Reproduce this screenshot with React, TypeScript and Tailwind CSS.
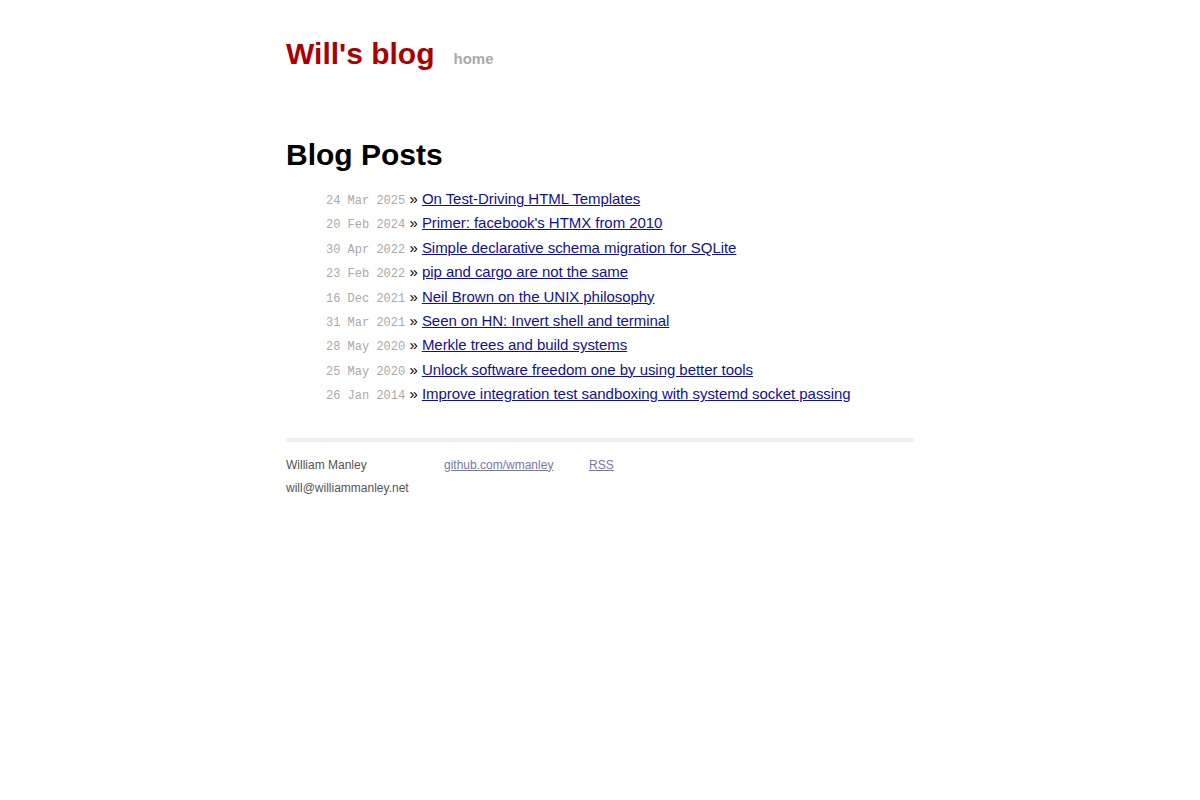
export default function App() {
  const posts = [
    ["24 Mar 2025", "On Test-Driving HTML Templates"],
    ["20 Feb 2024", "Primer: facebook's HTMX from 2010"],
    ["30 Apr 2022", "Simple declarative schema migration for SQLite"],
    ["23 Feb 2022", "pip and cargo are not the same"],
    ["16 Dec 2021", "Neil Brown on the UNIX philosophy"],
    ["31 Mar 2021", "Seen on HN: Invert shell and terminal"],
    ["28 May 2020", "Merkle trees and build systems"],
    ["25 May 2020", "Unlock software freedom one by using better tools"],
    ["26 Jan 2014", "Improve integration test sandboxing with systemd socket passing"],
  ];
  return (
    <div className="min-h-[800px] bg-white font-['Liberation_Sans',Arial,sans-serif]">
      <div className="w-[628px] mx-auto pt-[32px]">
        <header className="flex items-baseline">
          <span className="text-[30px] font-bold text-[#aa0000] leading-[44px]">Will's blog</span>
          <a className="ml-[19px] text-[15px] font-bold text-[#aaaaaa]">home</a>
        </header>
        <h1 className="mt-[57px] text-[30px] font-bold text-black leading-[44px]">Blog Posts</h1>
        <ul className="mt-[10px] pl-[40px]">
          {posts.map(([d, t]) => (
            <li key={t} className="h-[24.4px] leading-[24px] text-[15px] text-black whitespace-nowrap">
              <span className="font-['Liberation_Mono',monospace] text-[12px] leading-none text-[#aaaaaa]">{d}</span>{" "}
              »{" "}
              <a href="#" className="text-[#10109a] underline tracking-[-0.05px]">{t}</a>
            </li>
          ))}
        </ul>
        <div className="mt-[31px] h-[4px] bg-[#eeeeee] rounded-sm"></div>
        <div className="mt-[12px] text-[12px] text-[#555555] font-['Liberation_Sans',Arial,sans-serif] leading-[23px]">
          <div className="flex">
            <span className="w-[158px]">William Manley</span>
            <a href="#" className="w-[145px] text-[#7777aa] underline">github.com/wmanley</a>
            <a href="#" className="text-[#7777aa] underline">RSS</a>
          </div>
          <div>will@williammanley.net</div>
        </div>
      </div>
    </div>
  );
}
